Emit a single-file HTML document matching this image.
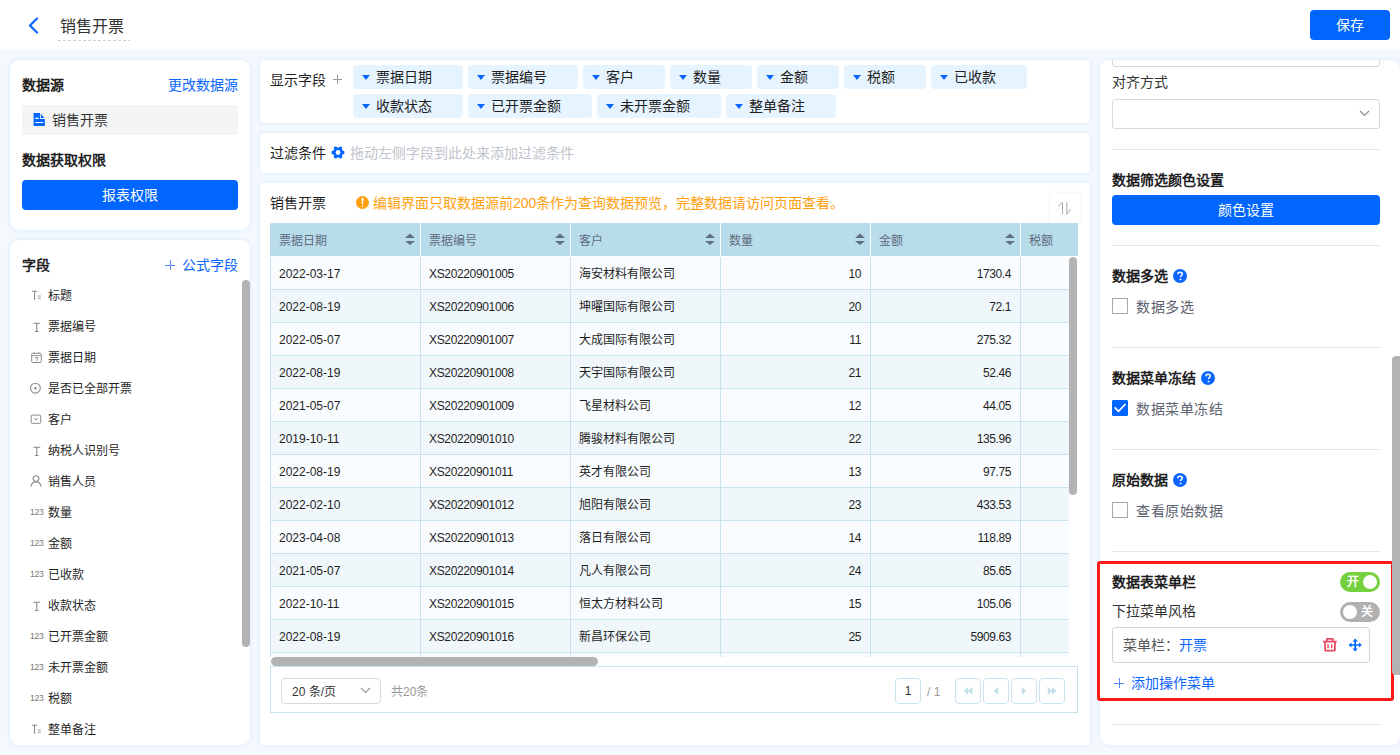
<!DOCTYPE html>
<html lang="zh-CN"><head><meta charset="utf-8"><style>
*{box-sizing:border-box;margin:0;padding:0}
html,body{width:1400px;height:755px;overflow:hidden}
body{position:relative;background:#f4f9fe;font-family:"Liberation Sans",sans-serif;font-size:14px;color:#333}
.abs{position:absolute}
.hdr{position:absolute;left:0;top:0;width:1400px;height:50px;background:#fff}
.card{position:absolute;background:#fff;border-radius:9px;box-shadow:0 0 5px rgba(175,212,252,.42)}
.fi{position:absolute;left:29px;height:20px;line-height:20px;font-size:12px;color:#1f1f1f;white-space:nowrap}
.fi .ic{position:absolute;left:0;top:3px;width:14px;height:14px}
.fi .ft{position:absolute;left:19px;top:1px}
.n123{position:absolute;left:1px;top:-3px;font-size:8.5px;color:#777;letter-spacing:-0.2px}
.chip{position:absolute;height:24px;background:#e6f4ff;border-radius:4px;font-size:14px;line-height:24px;color:#1f1f1f;white-space:nowrap}
.chip .tri{position:absolute;left:9px;top:10px;width:0;height:0;border-left:4px solid transparent;border-right:4px solid transparent;border-top:5px solid #0a66ff}
.chip span{position:absolute;left:23px;top:0}
.tbl{position:absolute;left:270px;top:223px;width:808px;height:443px;overflow:hidden;background:#fff}
.thead{position:absolute;left:0;top:0;width:808px;height:33px;background:#b9dceb;overflow:hidden;border-radius:2px 0 0 0}
.th{position:absolute;top:0;width:151px;height:33px;line-height:33px;padding-left:9px;padding-top:2px;font-size:12px;color:#5d6b7b;border-right:1px solid #fff}
.sorti{position:absolute;right:5px;top:10px}
.tbody{position:absolute;left:0;top:34px;width:799px;height:400px;overflow:hidden;border-left:1px solid #c9e3ee}
.tr{position:absolute;left:0;width:900px;height:33px;border-bottom:1px solid #c9e3ee}
.td{position:absolute;top:0;width:150px;height:32px;line-height:33px;padding:1px 8px 0 8px;font-size:12px;color:#1f1f1f;border-right:1px solid #c9e3ee;white-space:nowrap}
.td.num{text-align:right;padding-right:9px}
.sep{position:absolute;left:1112px;width:268px;height:1px;background:#e6e6e6}
.rtitle{position:absolute;left:1112px;font-size:14px;font-weight:bold;color:#1f1f1f;line-height:20px}
.cb{position:absolute;left:1112px;width:16px;height:16px;border:1px solid #a9a9b5;border-radius:0;background:#fff}
.cbl{position:absolute;left:1136px;font-size:14px;letter-spacing:0.55px;color:#5c6270;line-height:20px;margin-top:1px}
.pbtn{position:absolute;top:678px;width:26px;height:26px;border:1px solid #c9e3ee;border-radius:4px;background:#fff}
</style></head><body>
<div class="hdr">
  <svg class="abs" style="left:27.2px;top:17px" width="12" height="17" viewBox="0 0 12 17"><path d="M10 1.5L3 8.5l7 7" stroke="#0a66ff" stroke-width="2.2" fill="none" stroke-linecap="round" stroke-linejoin="round"/></svg>
  <div class="abs" style="left:60px;top:17px;font-size:16px;line-height:20px;color:#333">销售开票</div>
  <div class="abs" style="left:58px;top:40px;width:72px;height:1px;background:repeating-linear-gradient(90deg,#d0d0d0 0 3px,transparent 3px 5px)"></div>
  <div class="abs" style="left:1310px;top:10px;width:80px;height:30px;background:#0066ff;border-radius:4px;color:#fff;font-size:14px;line-height:30px;text-align:center">保存</div>
</div>

<!-- left card 1 -->
<div class="card" style="left:10px;top:60px;width:240px;height:170px"></div>
<div class="abs" style="left:22px;top:75px;font-weight:bold;line-height:20px;color:#1f1f1f">数据源</div>
<div class="abs" style="left:168px;top:75px;line-height:20px;color:#0a66ff">更改数据源</div>
<div class="abs" style="left:22px;top:105px;width:216px;height:30px;background:#f4f4f4;border-radius:2px"></div>
<svg class="abs" style="left:33px;top:113px" width="12" height="14" viewBox="0 0 12 14"><path d="M0.6 0.1H7.1V5.9H11.85V13.1H0.6z" fill="#0066ff"/><path d="M8 0.8L11.3 4.9H8z" fill="#0066ff"/><path d="M2.3 5.4H5.7M2.3 9.5H10.2" stroke="#fff" stroke-width="1.2"/></svg>
<div class="abs" style="left:52px;top:110px;line-height:20px;color:#333">销售开票</div>
<div class="abs" style="left:22px;top:150px;font-weight:bold;line-height:20px;color:#1f1f1f">数据获取权限</div>
<div class="abs" style="left:22px;top:180px;width:216px;height:30px;background:#0066ff;border-radius:4px;color:#fff;line-height:30px;text-align:center">报表权限</div>

<!-- left card 2 -->
<div class="card" style="left:10px;top:240px;width:240px;height:505px;overflow:hidden"></div>
<div class="abs" style="left:22px;top:255px;font-weight:bold;line-height:20px;color:#1f1f1f">字段</div>
<svg class="abs" style="left:165px;top:259.5px" width="10" height="10" viewBox="0 0 10 10"><path d="M5.5 0v10M0 5.5h10" stroke="#5b86ff" stroke-width="1"/></svg>
<div class="abs" style="left:182px;top:255px;line-height:20px;color:#0a66ff">公式字段</div>
<div class="abs" style="left:242px;top:280px;width:8px;height:367px;background:#b3b3b3;border-radius:4px"></div>
<div class="fi" style="top:285px"><span class="ic"><svg width="14" height="14" viewBox="0 0 14 14"><path d="M3 3.3h5.2M5.6 3.3v8.8" stroke="#8c8c8c" stroke-width="1.1" fill="none"/><path d="M8.8 8h3M8.8 10.3h3" stroke="#8c8c8c" stroke-width="0.9" fill="none"/></svg></span><span class="ft">标题</span></div>
<div class="fi" style="top:316px"><span class="ic"><svg width="14" height="14" viewBox="0 0 14 14"><path d="M4.3 4.2h7M7.8 4.2v8.3M6 12.5h3.6" stroke="#8c8c8c" stroke-width="1.1" fill="none"/></svg></span><span class="ft">票据编号</span></div>
<div class="fi" style="top:347px"><span class="ic"><svg width="14" height="14" viewBox="0 0 14 14"><rect x="2.7" y="3.3" width="9.6" height="9.2" rx="1" stroke="#8c8c8c" stroke-width="1" fill="none"/><path d="M2.7 5.6h9.6M5.2 2.3v1.6M9.8 2.3v1.6M6 7.6h3l-1.5 3.2" stroke="#8c8c8c" stroke-width="0.9" fill="none"/></svg></span><span class="ft">票据日期</span></div>
<div class="fi" style="top:378px"><span class="ic"><svg width="14" height="14" viewBox="0 0 14 14"><circle cx="6.4" cy="7.2" r="4.9" stroke="#8c8c8c" stroke-width="1.1" fill="none"/><circle cx="6.4" cy="7.2" r="1.2" fill="#8c8c8c"/></svg></span><span class="ft">是否已全部开票</span></div>
<div class="fi" style="top:409px"><span class="ic"><svg width="14" height="14" viewBox="0 0 14 14"><rect x="2.2" y="3.1" width="9.5" height="8.2" rx="0.8" stroke="#8c8c8c" stroke-width="1" fill="none"/><path d="M5.3 6.3l1.7 1.7 1.7-1.7" stroke="#8c8c8c" stroke-width="0.9" fill="none"/></svg></span><span class="ft">客户</span></div>
<div class="fi" style="top:440px"><span class="ic"><svg width="14" height="14" viewBox="0 0 14 14"><path d="M4.3 4.2h7M7.8 4.2v8.3M6 12.5h3.6" stroke="#8c8c8c" stroke-width="1.1" fill="none"/></svg></span><span class="ft">纳税人识别号</span></div>
<div class="fi" style="top:471px"><span class="ic"><svg width="14" height="14" viewBox="0 0 14 14"><circle cx="7" cy="4.6" r="2.9" stroke="#8c8c8c" stroke-width="1.1" fill="none"/><path d="M2 12.8c0.4-3.2 2.4-4.9 5-4.9s4.6 1.7 5 4.9" stroke="#8c8c8c" stroke-width="1.1" fill="none"/></svg></span><span class="ft">销售人员</span></div>
<div class="fi" style="top:502px"><span class="ic"><span class="n123">123</span></span><span class="ft">数量</span></div>
<div class="fi" style="top:533px"><span class="ic"><span class="n123">123</span></span><span class="ft">金额</span></div>
<div class="fi" style="top:564px"><span class="ic"><span class="n123">123</span></span><span class="ft">已收款</span></div>
<div class="fi" style="top:595px"><span class="ic"><svg width="14" height="14" viewBox="0 0 14 14"><path d="M4.3 4.2h7M7.8 4.2v8.3M6 12.5h3.6" stroke="#8c8c8c" stroke-width="1.1" fill="none"/></svg></span><span class="ft">收款状态</span></div>
<div class="fi" style="top:626px"><span class="ic"><span class="n123">123</span></span><span class="ft">已开票金额</span></div>
<div class="fi" style="top:657px"><span class="ic"><span class="n123">123</span></span><span class="ft">未开票金额</span></div>
<div class="fi" style="top:688px"><span class="ic"><span class="n123">123</span></span><span class="ft">税额</span></div>
<div class="fi" style="top:719px"><span class="ic"><svg width="14" height="14" viewBox="0 0 14 14"><path d="M3 3.3h5.2M5.6 3.3v8.8" stroke="#8c8c8c" stroke-width="1.1" fill="none"/><path d="M8.8 8h3M8.8 10.3h3" stroke="#8c8c8c" stroke-width="0.9" fill="none"/></svg></span><span class="ft">整单备注</span></div>


<!-- middle: display fields -->
<div class="card" style="left:260px;top:60px;width:830px;height:63px;border-radius:4px"></div>
<div class="abs" style="left:270px;top:70px;line-height:20px;color:#1f1f1f">显示字段</div>
<svg class="abs" style="left:333px;top:75px" width="9" height="9" viewBox="0 0 9 9"><path d="M4.5 0v9M0 4.5h9" stroke="#999" stroke-width="1"/></svg>
<div class="chip" style="left:353px;top:65px;width:110px"><i class="tri"></i><span>票据日期</span></div>
<div class="chip" style="left:468px;top:65px;width:110px"><i class="tri"></i><span>票据编号</span></div>
<div class="chip" style="left:583px;top:65px;width:82px"><i class="tri"></i><span>客户</span></div>
<div class="chip" style="left:670px;top:65px;width:82px"><i class="tri"></i><span>数量</span></div>
<div class="chip" style="left:757px;top:65px;width:82px"><i class="tri"></i><span>金额</span></div>
<div class="chip" style="left:844px;top:65px;width:82px"><i class="tri"></i><span>税额</span></div>
<div class="chip" style="left:931px;top:65px;width:96px"><i class="tri"></i><span>已收款</span></div>
<div class="chip" style="left:353px;top:94px;width:110px"><i class="tri"></i><span>收款状态</span></div>
<div class="chip" style="left:468px;top:94px;width:124px"><i class="tri"></i><span>已开票金额</span></div>
<div class="chip" style="left:597px;top:94px;width:124px"><i class="tri"></i><span>未开票金额</span></div>
<div class="chip" style="left:726px;top:94px;width:110px"><i class="tri"></i><span>整单备注</span></div>


<!-- filter -->
<div class="card" style="left:260px;top:133px;width:830px;height:40px;border-radius:4px"></div>
<div class="abs" style="left:270px;top:143px;line-height:20px;color:#1f1f1f">过滤条件</div>
<svg class="abs" style="left:330.5px;top:146px" width="14" height="13" viewBox="0 0 14 13"><g fill="#0066ff" transform="translate(7 6.5)"><circle r="4.9"/><rect x="3" y="-1.7" width="3.4" height="3.4" rx="0.9" transform="rotate(0)"/><rect x="3" y="-1.7" width="3.4" height="3.4" rx="0.9" transform="rotate(60)"/><rect x="3" y="-1.7" width="3.4" height="3.4" rx="0.9" transform="rotate(120)"/><rect x="3" y="-1.7" width="3.4" height="3.4" rx="0.9" transform="rotate(180)"/><rect x="3" y="-1.7" width="3.4" height="3.4" rx="0.9" transform="rotate(240)"/><rect x="3" y="-1.7" width="3.4" height="3.4" rx="0.9" transform="rotate(300)"/></g><circle cx="7" cy="6.5" r="2.4" fill="#fff"/></svg>
<div class="abs" style="left:350px;top:143px;line-height:20px;color:#c0c4cc">拖动左侧字段到此处来添加过滤条件</div>

<!-- table card -->
<div class="card" style="left:260px;top:183px;width:830px;height:562px;border-radius:4px"></div>
<div class="abs" style="left:270px;top:193px;line-height:20px;color:#1f1f1f">销售开票</div>
<svg class="abs" style="left:356px;top:196px" width="13" height="13" viewBox="0 0 13 13"><circle cx="6.5" cy="6.5" r="6.5" fill="#ffa00f"/><path d="M5.5 2h2l-0.5 6.8h-1z" fill="#fff"/><rect x="5.8" y="9.6" width="1.4" height="1.4" fill="#fff"/></svg>
<div class="abs" style="left:373px;top:193px;line-height:20px;color:#ffa00f">编辑界面只取数据源前200条作为查询数据预览，完整数据请访问页面查看。</div>
<div class="abs" style="left:1050px;top:193px;width:30px;height:30px;background:#fff;box-shadow:0 0 3px rgba(0,0,0,.08)"></div>
<svg class="abs" style="left:1057px;top:200px" width="16" height="16" viewBox="0 0 16 16"><path d="M1.2 6.2L5.5 2.3V14.2" stroke="#a8a8a8" stroke-width="1" fill="none"/><path d="M9.8 2.3V14.2L13.7 9.1" stroke="#a8a8a8" stroke-width="1" fill="none"/></svg>

<div class="tbl">
 <div class="thead"><div class="th" style="left:0px">票据日期<svg class="sorti" width="10" height="13" viewBox="0 0 10 13"><path d="M5 0.5L10 4.9H0z M5 12.1L10 7.9H0z" fill="#5f6f86"/></svg></div><div class="th" style="left:150px">票据编号<svg class="sorti" width="10" height="13" viewBox="0 0 10 13"><path d="M5 0.5L10 4.9H0z M5 12.1L10 7.9H0z" fill="#5f6f86"/></svg></div><div class="th" style="left:300px">客户<svg class="sorti" width="10" height="13" viewBox="0 0 10 13"><path d="M5 0.5L10 4.9H0z M5 12.1L10 7.9H0z" fill="#5f6f86"/></svg></div><div class="th" style="left:450px">数量<svg class="sorti" width="10" height="13" viewBox="0 0 10 13"><path d="M5 0.5L10 4.9H0z M5 12.1L10 7.9H0z" fill="#5f6f86"/></svg></div><div class="th" style="left:600px">金额<svg class="sorti" width="10" height="13" viewBox="0 0 10 13"><path d="M5 0.5L10 4.9H0z M5 12.1L10 7.9H0z" fill="#5f6f86"/></svg></div><div class="th" style="left:750px">税额</div></div>
 <div class="tbody"><div class="tr" style="top:0px;background:#f9fcfe"><div class="td" style="left:0">2022-03-17</div><div class="td" style="left:150px;letter-spacing:-0.35px">XS20220901005</div><div class="td" style="left:300px">海安材料有限公司</div><div class="td num" style="left:450px;letter-spacing:-0.4px">10</div><div class="td num" style="left:600px;letter-spacing:-0.4px">1730.4</div><div class="td" style="left:750px"></div></div>
<div class="tr" style="top:33px;background:#f0f7fa"><div class="td" style="left:0">2022-08-19</div><div class="td" style="left:150px;letter-spacing:-0.35px">XS20220901006</div><div class="td" style="left:300px">坤曜国际有限公司</div><div class="td num" style="left:450px;letter-spacing:-0.4px">20</div><div class="td num" style="left:600px;letter-spacing:-0.4px">72.1</div><div class="td" style="left:750px"></div></div>
<div class="tr" style="top:66px;background:#f9fcfe"><div class="td" style="left:0">2022-05-07</div><div class="td" style="left:150px;letter-spacing:-0.35px">XS20220901007</div><div class="td" style="left:300px">大成国际有限公司</div><div class="td num" style="left:450px;letter-spacing:-0.4px">11</div><div class="td num" style="left:600px;letter-spacing:-0.4px">275.32</div><div class="td" style="left:750px"></div></div>
<div class="tr" style="top:99px;background:#f0f7fa"><div class="td" style="left:0">2022-08-19</div><div class="td" style="left:150px;letter-spacing:-0.35px">XS20220901008</div><div class="td" style="left:300px">天宇国际有限公司</div><div class="td num" style="left:450px;letter-spacing:-0.4px">21</div><div class="td num" style="left:600px;letter-spacing:-0.4px">52.46</div><div class="td" style="left:750px"></div></div>
<div class="tr" style="top:132px;background:#f9fcfe"><div class="td" style="left:0">2021-05-07</div><div class="td" style="left:150px;letter-spacing:-0.35px">XS20220901009</div><div class="td" style="left:300px">飞星材料公司</div><div class="td num" style="left:450px;letter-spacing:-0.4px">12</div><div class="td num" style="left:600px;letter-spacing:-0.4px">44.05</div><div class="td" style="left:750px"></div></div>
<div class="tr" style="top:165px;background:#f0f7fa"><div class="td" style="left:0">2019-10-11</div><div class="td" style="left:150px;letter-spacing:-0.35px">XS20220901010</div><div class="td" style="left:300px">腾骏材料有限公司</div><div class="td num" style="left:450px;letter-spacing:-0.4px">22</div><div class="td num" style="left:600px;letter-spacing:-0.4px">135.96</div><div class="td" style="left:750px"></div></div>
<div class="tr" style="top:198px;background:#f9fcfe"><div class="td" style="left:0">2022-08-19</div><div class="td" style="left:150px;letter-spacing:-0.35px">XS20220901011</div><div class="td" style="left:300px">英才有限公司</div><div class="td num" style="left:450px;letter-spacing:-0.4px">13</div><div class="td num" style="left:600px;letter-spacing:-0.4px">97.75</div><div class="td" style="left:750px"></div></div>
<div class="tr" style="top:231px;background:#f0f7fa"><div class="td" style="left:0">2022-02-10</div><div class="td" style="left:150px;letter-spacing:-0.35px">XS20220901012</div><div class="td" style="left:300px">旭阳有限公司</div><div class="td num" style="left:450px;letter-spacing:-0.4px">23</div><div class="td num" style="left:600px;letter-spacing:-0.4px">433.53</div><div class="td" style="left:750px"></div></div>
<div class="tr" style="top:264px;background:#f9fcfe"><div class="td" style="left:0">2023-04-08</div><div class="td" style="left:150px;letter-spacing:-0.35px">XS20220901013</div><div class="td" style="left:300px">落日有限公司</div><div class="td num" style="left:450px;letter-spacing:-0.4px">14</div><div class="td num" style="left:600px;letter-spacing:-0.4px">118.89</div><div class="td" style="left:750px"></div></div>
<div class="tr" style="top:297px;background:#f0f7fa"><div class="td" style="left:0">2021-05-07</div><div class="td" style="left:150px;letter-spacing:-0.35px">XS20220901014</div><div class="td" style="left:300px">凡人有限公司</div><div class="td num" style="left:450px;letter-spacing:-0.4px">24</div><div class="td num" style="left:600px;letter-spacing:-0.4px">85.65</div><div class="td" style="left:750px"></div></div>
<div class="tr" style="top:330px;background:#f9fcfe"><div class="td" style="left:0">2022-10-11</div><div class="td" style="left:150px;letter-spacing:-0.35px">XS20220901015</div><div class="td" style="left:300px">恒太方材料公司</div><div class="td num" style="left:450px;letter-spacing:-0.4px">15</div><div class="td num" style="left:600px;letter-spacing:-0.4px">105.06</div><div class="td" style="left:750px"></div></div>
<div class="tr" style="top:363px;background:#f0f7fa"><div class="td" style="left:0">2022-08-19</div><div class="td" style="left:150px;letter-spacing:-0.35px">XS20220901016</div><div class="td" style="left:300px">新昌环保公司</div><div class="td num" style="left:450px;letter-spacing:-0.4px">25</div><div class="td num" style="left:600px;letter-spacing:-0.4px">5909.63</div><div class="td" style="left:750px"></div></div>
<div class="tr" style="top:396px;background:#f9fcfe"><div class="td" style="left:0"></div><div class="td" style="left:150px;letter-spacing:-0.35px"></div><div class="td" style="left:300px"></div><div class="td num" style="left:450px;letter-spacing:-0.4px"></div><div class="td num" style="left:600px;letter-spacing:-0.4px"></div><div class="td" style="left:750px"></div></div>
</div>
 <div class="abs" style="left:799px;top:34px;width:8px;height:238px;background:#b3b3b3;border-radius:4px"></div>
 <div class="abs" style="left:1px;top:434px;width:327px;height:9px;background:#b3b3b3;border-radius:4.5px"></div>
</div>
<!-- pagination -->
<div class="abs" style="left:270px;top:666px;width:808px;height:47px;border:1px solid #c9e3ee;background:#fff"></div>
<div class="abs" style="left:281px;top:678px;width:100px;height:26px;border:1px solid #d9d9d9;border-radius:4px"></div>
<div class="abs" style="left:292px;top:682px;line-height:20px;font-size:12px;color:#333">20 条/页</div>
<svg class="abs" style="left:360px;top:687px" width="11" height="7" viewBox="0 0 11 7"><path d="M1 1l4.5 4.5L10 1" stroke="#999" stroke-width="1.1" fill="none"/></svg>
<div class="abs" style="left:391px;top:682px;line-height:20px;font-size:12px;color:#999">共20条</div>
<div class="pbtn" style="left:895px;font-size:12px;text-align:center;line-height:24px;color:#333">1</div>
<div class="abs" style="left:927px;top:682px;line-height:20px;font-size:12px;color:#999">/ 1</div>
<div class="pbtn" style="left:955px"><svg width="24" height="24" viewBox="0 0 24 24"><path d="M7.8 12l4.4-4v8zM12 12l4.4-4v8z" fill="#c2dfeb"/></svg></div>
<div class="pbtn" style="left:983px"><svg width="24" height="24" viewBox="0 0 24 24"><path d="M9.8 12l4.4-4v8z" fill="#c2dfeb"/></svg></div>
<div class="pbtn" style="left:1011px"><svg width="24" height="24" viewBox="0 0 24 24"><path d="M14.2 12l-4.4-4v8z" fill="#c2dfeb"/></svg></div>
<div class="pbtn" style="left:1039px"><svg width="24" height="24" viewBox="0 0 24 24"><path d="M12.2 12l-4.4-4v8zM16.4 12l-4.4-4v8z" fill="#c2dfeb"/></svg></div>

<!-- right panel -->
<div class="card" style="left:1100px;top:60px;width:300px;height:685px"></div>
<div class="abs" style="left:1100px;top:60px;width:300px;height:10px;overflow:hidden"><div class="abs" style="left:12px;top:-23px;width:268px;height:30px;border:1px solid #d9d9d9;border-radius:3px"></div></div>
<div class="abs" style="left:1112px;top:72px;line-height:20px;color:#333">对齐方式</div>
<div class="abs" style="left:1112px;top:99px;width:268px;height:30px;border:1px solid #d9d9d9;border-radius:3px"></div>
<svg class="abs" style="left:1359px;top:110px" width="11" height="7" viewBox="0 0 11 7"><path d="M1 1l4.5 4.5L10 1" stroke="#888" stroke-width="1.1" fill="none"/></svg>
<div class="sep" style="top:149px"></div>
<div class="rtitle" style="top:170px">数据筛选颜色设置</div>
<div class="abs" style="left:1112px;top:195px;width:268px;height:30px;background:#0066ff;border-radius:4px;color:#fff;line-height:30px;text-align:center">颜色设置</div>
<div class="sep" style="top:245px"></div>
<div class="rtitle" style="top:266px">数据多选</div>
<div class="abs" style="left:1173px;top:269px"><svg width="14" height="14" viewBox="0 0 14 14"><circle cx="7" cy="7" r="7" fill="#0a66ff"/><path d="M4.9 5.3c0-1.3 1-2.1 2.2-2.1 1.3 0 2.2.8 2.2 1.9 0 1.5-1.8 1.6-1.8 3" stroke="#fff" stroke-width="1.5" fill="none"/><circle cx="7.5" cy="10.4" r="0.9" fill="#fff"/></svg></div>
<div class="cb" style="top:298px"></div>
<div class="cbl" style="top:296px">数据多选</div>
<div class="sep" style="top:347px"></div>
<div class="rtitle" style="top:368px">数据菜单冻结</div>
<div class="abs" style="left:1201px;top:371px"><svg width="14" height="14" viewBox="0 0 14 14"><circle cx="7" cy="7" r="7" fill="#0a66ff"/><path d="M4.9 5.3c0-1.3 1-2.1 2.2-2.1 1.3 0 2.2.8 2.2 1.9 0 1.5-1.8 1.6-1.8 3" stroke="#fff" stroke-width="1.5" fill="none"/><circle cx="7.5" cy="10.4" r="0.9" fill="#fff"/></svg></div>
<div class="cb" style="top:400px;background:#0066ff;border-color:#0066ff;border-radius:1px"><svg width="14" height="14" viewBox="0 0 14 14" style="position:absolute;left:0;top:0"><path d="M1.6 6.3L5.5 10.3L12.5 3" stroke="#fff" stroke-width="1.8" fill="none"/></svg></div>
<div class="cbl" style="top:398px">数据菜单冻结</div>
<div class="sep" style="top:449px"></div>
<div class="rtitle" style="top:470px">原始数据</div>
<div class="abs" style="left:1173px;top:473px"><svg width="14" height="14" viewBox="0 0 14 14"><circle cx="7" cy="7" r="7" fill="#0a66ff"/><path d="M4.9 5.3c0-1.3 1-2.1 2.2-2.1 1.3 0 2.2.8 2.2 1.9 0 1.5-1.8 1.6-1.8 3" stroke="#fff" stroke-width="1.5" fill="none"/><circle cx="7.5" cy="10.4" r="0.9" fill="#fff"/></svg></div>
<div class="cb" style="top:502px"></div>
<div class="cbl" style="top:500px">查看原始数据</div>
<div class="sep" style="top:551px"></div>
<div class="abs" style="left:1097px;top:561px;width:297px;height:140px;border:3px solid #ff1a1a;border-radius:3px"></div>
<div class="rtitle" style="top:572px">数据表菜单栏</div>
<div class="abs" style="left:1340px;top:572px;width:40px;height:20px;border-radius:10px;background:#74d13d"></div>
<div class="abs" style="left:1347px;top:572px;line-height:20px;font-size:12px;color:#fff;font-weight:bold">开</div>
<div class="abs" style="left:1363px;top:575px;width:14px;height:14px;border-radius:7px;background:#fff"></div>
<div class="abs" style="left:1112px;top:601px;line-height:20px;color:#333">下拉菜单风格</div>
<div class="abs" style="left:1340px;top:602px;width:40px;height:20px;border-radius:10px;background:#b0b0b0"></div>
<div class="abs" style="left:1343px;top:605px;width:14px;height:14px;border-radius:7px;background:#fff"></div>
<div class="abs" style="left:1361px;top:602px;line-height:20px;font-size:12px;color:#fff;font-weight:bold">关</div>
<div class="abs" style="left:1112px;top:627px;width:258px;height:36px;border:1px solid #d4d4d4;border-radius:3px"></div>
<div class="abs" style="left:1123px;top:635px;line-height:20px;color:#555">菜单栏：<span style="color:#0a66ff">开票</span></div>
<svg class="abs" style="left:1323px;top:637px" width="14" height="16" viewBox="0 0 14 16"><path d="M0 4.6H13.75" stroke="#e84a5f" stroke-width="1.8" fill="none"/><path d="M3.9 4.4V1.9H9.8V4.4" stroke="#e84a5f" stroke-width="1.7" fill="none"/><path d="M2.15 4.6V12.9Q2.15 13.6 2.9 13.6H11.1Q11.9 13.6 11.9 12.9V4.6" stroke="#e84a5f" stroke-width="1.8" fill="none"/><path d="M5 7.2V11.3M8.75 7.2V11.3" stroke="#e84a5f" stroke-width="1.4" fill="none"/></svg>
<svg class="abs" style="left:1348px;top:637.5px" width="14" height="14" viewBox="0 0 14 14"><path d="M7.2 0.4L9.8 3.4H4.6zM7.2 13.6L9.8 10.6H4.6zM0.5 7L3.5 4.5V9.5zM13.9 7L10.9 4.5V9.5z" fill="#0066ff"/><path d="M7.2 3V11M3 7H11.4" stroke="#0066ff" stroke-width="1.7"/></svg>
<svg class="abs" style="left:1114px;top:677.5px" width="10" height="10" viewBox="0 0 10 10"><path d="M5.5 0v10M0 5.5h10" stroke="#5b86ff" stroke-width="1"/></svg>
<div class="abs" style="left:1131px;top:673px;line-height:20px;color:#0a66ff">添加操作菜单</div>
<div class="sep" style="top:724px"></div>
<div class="abs" style="left:1392px;top:356px;width:8px;height:319px;background:#b3b3b3;border-radius:4px 0 0 4px"></div>
</body></html>
